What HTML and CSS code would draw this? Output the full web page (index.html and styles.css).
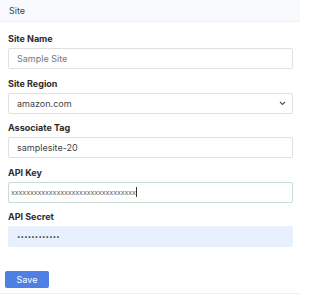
FILE: index.html
```html
<!DOCTYPE html>
<html>
<head>
<meta charset="utf-8">
<link rel="stylesheet" href="styles.css">
</head>
<body>
<div class="card">
  <div class="card-header">Site</div>
  <form class="card-body">
    <div class="field">
      <label class="label">Site Name</label>
      <div class="input"><span class="ph">Sample Site</span></div>
    </div>
    <div class="field">
      <label class="label">Site Region</label>
      <div class="input select"><span class="val">amazon.com</span>
        <svg class="chev" width="7" height="5" viewBox="0 0 7 5"><path d="M1 1 L3.5 3.5 L6 1" fill="none" stroke="#555" stroke-width="1.1"/></svg>
      </div>
    </div>
    <div class="field">
      <label class="label">Associate Tag</label>
      <div class="input"><span class="val">samplesite-20</span></div>
    </div>
    <div class="field">
      <label class="label">API Key</label>
      <div class="input focus"><span class="xs">xxxxxxxxxxxxxxxxxxxxxxxxxxxxxxxxx</span><span class="caret"></span></div>
    </div>
    <div class="field">
      <label class="label">API Secret</label>
      <div class="input auto"><span class="dots">••••••••••••</span></div>
    </div>
    <div class="actions">
      <button type="button" class="btn">Save</button>
    </div>
  </form>
</div>
</body>
</html>
```
FILE: styles.css
```css
* { box-sizing: border-box; }
html, body { margin: 0; padding: 0; background: #fff; }
body { font-family: "Inter", "Liberation Sans", sans-serif; color: #333; width: 300px; height: 294px; overflow: hidden; }
.card { display: flex; flex-direction: column; height: 294px; }
.card-header { flex: 0 0 22px; height: 22px; background: #f8f9fc; border-bottom: 1px solid #f0f1f5; font-size: 9px; color: #444; padding: 0 9px; display: flex; align-items: center; }
.card-body { flex: 1; padding: 11px 7px 0 8px; display: flex; flex-direction: column; border-bottom: 1px solid #eceef2; }
.field { display: flex; flex-direction: column; margin-bottom: 8.5px; }
.label { font-size: 9px; font-weight: 700; color: #2b2b2b; height: 15px; line-height: 12px; }
.input { height: 21px; border: 1px solid #e0e0e0; border-radius: 2px; display: flex; align-items: center; padding: 0 8px; font-size: 9px; color: #444; background: #fff; }
.ph { color: #777; }
.val { color: #444; }
.select { justify-content: space-between; padding-right: 6px; }
.chev { display: block; }
.focus { border-color: #c9dcd4; padding-left: 2px; }
.xs { font-size: 7.3px; color: #666; letter-spacing: -0.2px; }
.caret { width: 1px; height: 10px; background: #333; }
.auto { background: #e8f0fe; border-color: #e8f0fe; }
.dots { font-size: 6px; color: #333; letter-spacing: 0.2px; }
.actions { display: flex; padding-top: 15px; margin-left: -3px; }
.btn { width: 44px; height: 17px; border: none; border-radius: 2px; background: #4e7fe3; color: #fff; font-family: inherit; font-size: 9px; padding: 0; }
```
